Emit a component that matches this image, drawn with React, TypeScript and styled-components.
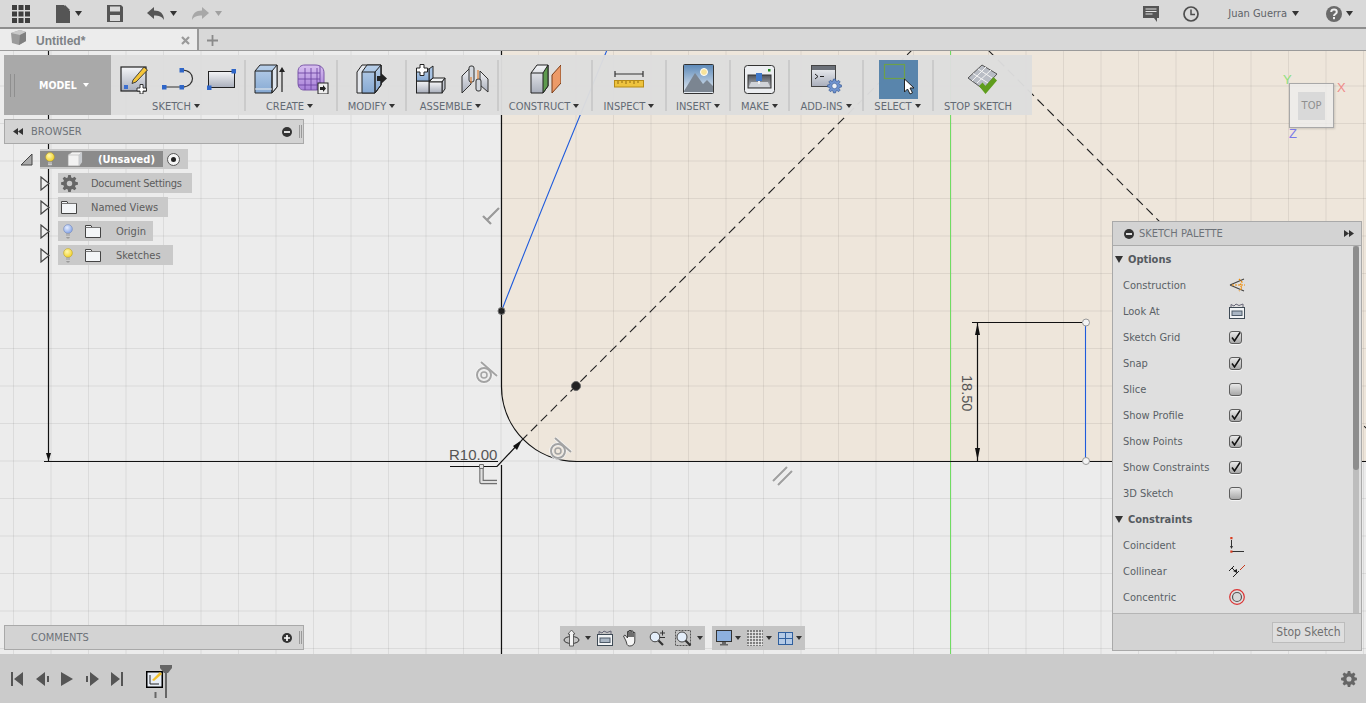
import React from 'react'
import styled, { createGlobalStyle } from 'styled-components'

const Global = createGlobalStyle`
  html, body { margin: 0; padding: 0; height: 100%; overflow: hidden; }
  body { font-family: "DejaVu Sans Condensed", "DejaVu Sans", "Liberation Sans", sans-serif; font-stretch: condensed; }
`

const Page = styled.div`
  display: flex;
  flex-direction: column;
  width: 1366px;
  height: 703px;
  background: #ececec;
`

/* top bar */
const TopBar = styled.header`
  display: flex;
  align-items: center;
  flex: none;
  height: 27px;
  padding-left: 12px;
  background: #d9d9d9;
  border-bottom: 2px solid #8e8e8e;
`
const TopItem = styled.div<{ $ml?: number }>`
  display: flex;
  align-items: center;
  margin-left: ${p => p.$ml || 0}px;
`
const Spring = styled.div`
  flex: 1;
`
const UserName = styled.span`
  font-size: 11px;
  color: #5f6368;
`
const IconSvg = styled.svg`
  display: block;
  flex: none;
`
const Caret = ({ color = '#333', ml = 0, w = 7 }: { color?: string; ml?: number; w?: number }) => (
  <IconSvg width={w} height={w === 7 ? 5 : 4} viewBox="0 0 8 5" preserveAspectRatio="none" style={{ marginLeft: ml }}>
    <path d="M0 0h8L4 5z" fill={color} />
  </IconSvg>
)

/* tabs */
const TabBar = styled.div`
  display: flex;
  align-items: stretch;
  flex: none;
  height: 21px;
  background: #d8d8d8;
  border-bottom: 1px solid #9a9a9a;
`
const Tab = styled.div`
  display: flex;
  align-items: center;
  width: 199px;
  padding-left: 10px;
  box-sizing: border-box;
  background: #ececec;
  border-right: 2px solid #9a9a9a;
`
const TabCube = styled(IconSvg)`
  margin-top: -3px;
`
const TabTitle = styled.span`
  margin-left: 10px;
  padding-top: 3px;
  flex: 1;
  font: bold 12px "Liberation Sans", sans-serif;
  color: #7d8286;
`
const TabClose = styled(IconSvg)`
  margin: 2px 7px 0 0;
`
const TabPlus = styled(IconSvg)`
  margin: 6px 0 0 8px;
`

/* canvas */
const Canvas = styled.main`
  position: relative;
  flex: 1;
  overflow: hidden;
`
const Drawing = styled.svg`
  position: absolute;
  left: 0;
  top: 0;
`

/* ribbon */
const Ribbon = styled.nav`
  position: absolute;
  left: 4px;
  top: 4px;
  display: flex;
  width: 1028px;
  height: 60px;
  background: rgba(221, 221, 221, 0.97);
`
const ModelBlock = styled.div`
  display: flex;
  align-items: center;
  width: 107px;
  padding-left: 6px;
  box-sizing: border-box;
  background: #a9a9a9;
  color: #fff;
  font-size: 10.5px;
  font-weight: bold;
`
const ModelGrip = styled.div`
  width: 5px;
  height: 23px;
  margin-right: 24px;
  box-sizing: border-box;
  border-left: 1px solid #8f8f8f;
  border-right: 1px solid #8f8f8f;
`
const Group = styled.div<{ $w: number }>`
  display: flex;
  flex-direction: column;
  align-items: center;
  width: ${p => p.$w}px;
`
const GroupIcons = styled.div<{ $gap?: number }>`
  display: flex;
  align-items: center;
  justify-content: center;
  gap: ${p => p.$gap || 0}px;
  height: 38px;
  margin-top: 5px;
`
const GroupLabel = styled.div<{ $pr?: number }>`
  display: flex;
  align-items: center;
  gap: 3px;
  height: 14px;
  margin-top: 1px;
  padding-right: ${p => p.$pr || 0}px;
  font-size: 11px;
  color: #636a74;
  white-space: nowrap;
`
const Divider = styled.div`
  flex: none;
  width: 2px;
  margin: 5px 0 4px;
  background: #cbcbcb;
`
const SelectTile = styled.div`
  display: flex;
  width: 39px;
  height: 39px;
  background: #5985ac;
`

/* browser panel */
const PanelBar = styled.div`
  position: absolute;
  left: 4px;
  display: flex;
  align-items: center;
  width: 300px;
  height: 25px;
  box-sizing: border-box;
  padding: 0 1px 0 8px;
  background: #d3d3d3;
  border: 1px solid #a9a9a9;
  font-size: 11px;
  color: #6d7278;
`
const BrowserBar = styled(PanelBar)`
  top: 68px;
`
const CommentsBar = styled(PanelBar)`
  top: 574px;
`
const PanelTitle = styled.span<{ $ml: number }>`
  flex: 1;
  margin-left: ${p => p.$ml}px;
`
const Grip = styled.div`
  width: 3px;
  height: 13px;
  margin-left: 7px;
  border-left: 1px solid #9a9a9a;
  border-right: 1px solid #9a9a9a;
  box-sizing: border-box;
`
const Tree = styled.div`
  position: absolute;
  left: 20px;
  top: 98px;
  display: flex;
  flex-direction: column;
  gap: 4px;
`
const TreeRow = styled.div`
  display: flex;
  align-items: center;
  height: 20px;
`
const ExpandSlot = styled.div`
  width: 38px;
  padding-left: 20px;
  box-sizing: border-box;
`
const RootSlot = styled.div`
  width: 20px;
`
const Pill = styled.div<{ $w: number }>`
  display: flex;
  align-items: center;
  width: ${p => p.$w}px;
  height: 20px;
  background: #c9c9c9;
  font-size: 11px;
  color: #5c5c5c;
`
const TightName = styled.span`
  letter-spacing: -0.25px;
`
const RootName = styled.div`
  display: flex;
  align-items: center;
  width: 123px;
  height: 16px;
  background: #8b8b8b;
`
const RootText = styled.span`
  margin-left: 8px;
  font-size: 11px;
  font-weight: bold;
  color: #fff;
`
const IconSlot = styled.div<{ $w: number }>`
  display: flex;
  align-items: center;
  justify-content: center;
  width: ${p => p.$w}px;
`

/* nav strip */
const NavStrip = styled.div`
  position: absolute;
  left: 560px;
  top: 575px;
  display: flex;
  gap: 7px;
`
const NavGroup = styled.div<{ $w: number; $pl: number }>`
  display: flex;
  align-items: center;
  gap: 6px;
  width: ${p => p.$w}px;
  height: 24px;
  padding-left: ${p => p.$pl}px;
  box-sizing: border-box;
  background: #c4c4c4;
`
const NavItem = styled.div`
  display: flex;
  align-items: center;
  gap: 3px;
`

/* palette */
const Palette = styled.aside`
  position: absolute;
  left: 1112px;
  top: 170px;
  display: flex;
  flex-direction: column;
  width: 250px;
  height: 430px;
  box-sizing: border-box;
  background: #dfdfdf;
  border: 1px solid #a9a9a9;
`
const PaletteHead = styled.div`
  display: flex;
  align-items: center;
  flex: none;
  height: 24px;
  padding: 0 7px 0 11px;
  background: #d3d3d3;
  border-bottom: 1px solid #ababab;
  box-sizing: border-box;
  font-size: 11px;
  color: #6d7278;
`
const PaletteBody = styled.div`
  display: flex;
  flex: 1;
  min-height: 0;
`
const PaletteList = styled.div`
  flex: 1;
`
const Section = styled.div`
  display: flex;
  align-items: center;
  gap: 5px;
  height: 26px;
  padding-left: 2px;
  font-size: 11px;
  font-weight: bold;
  color: #555a60;
`
const Row = styled.div`
  display: flex;
  align-items: center;
  height: 26px;
  padding-left: 10px;
  font-size: 11px;
  color: #5a5f66;
`
const RowLabel = styled.span`
  width: 106px;
`
const Check = styled.div`
  display: flex;
  align-items: center;
  justify-content: center;
  width: 13px;
  height: 13px;
  box-sizing: border-box;
  border: 1px solid #5e5e5e;
  border-radius: 3px;
  background: linear-gradient(#e9e9e9, #a8a8a8);
  box-shadow: 0 1px 0 #f4f4f4;
`
const ScrollTrack = styled.div`
  flex: none;
  width: 6px;
  margin-right: 2px;
  background: #bdbdbd;
`
const ScrollThumb = styled.div`
  height: 224px;
  border-radius: 3px;
  background: #8d8d8d;
`
const PaletteFoot = styled.div`
  display: flex;
  align-items: center;
  justify-content: flex-end;
  flex: none;
  height: 36px;
  padding-right: 16px;
  background: #d3d3d3;
  border-top: 1px solid #b5b5b5;
`
const StopButton = styled.button`
  width: 73px;
  height: 21px;
  padding: 0;
  background: #dedede;
  border: 1px solid #bcbcbc;
  font: 12px "DejaVu Sans Condensed", "DejaVu Sans", sans-serif;
  font-stretch: condensed;
  color: #707070;
`

/* view cube */
const ViewCube = styled.div`
  position: absolute;
  left: 1289px;
  top: 32px;
  display: flex;
  align-items: center;
  justify-content: center;
  width: 45px;
  height: 45px;
  box-sizing: border-box;
  background: rgba(238, 238, 238, 0.75);
  border: 1px solid #a8a8a8;
  box-shadow: 1px 1px 2px rgba(0, 0, 0, 0.15);
`
const CubeFace = styled.div`
  display: flex;
  align-items: center;
  justify-content: center;
  width: 27px;
  height: 28px;
  background: #d9d9d9;
  font: 11px "DejaVu Sans Condensed", "DejaVu Sans", sans-serif;
  font-stretch: condensed;
  color: #8f8f8f;
`
const Axis = styled.span<{ $x: number; $y: number; $c: string }>`
  position: absolute;
  left: ${p => p.$x}px;
  top: ${p => p.$y}px;
  font: 13px "Liberation Sans", sans-serif;
  color: ${p => p.$c};
`

/* timeline */
const Timeline = styled.footer`
  display: flex;
  align-items: center;
  flex: none;
  height: 49px;
  padding: 0 9px 0 11px;
  background: #cbcbcb;
`
const Transport = styled.div`
  display: flex;
  align-items: center;
  gap: 12.5px;
`
const Steps = styled.div`
  margin-left: 23px;
  align-self: flex-start;
  margin-top: 11px;
`

/* ---- icons ---- */
const Defs = () => (
  <IconSvg width={0} height={0} style={{ position: 'absolute' }}>
    <defs>
      <linearGradient id="gBlue" x1="0" y1="0" x2="0" y2="1">
        <stop offset="0" stopColor="#b9d0ea" />
        <stop offset="1" stopColor="#86a9d3" />
      </linearGradient>
      <linearGradient id="gSteel" x1="0" y1="0" x2="0" y2="1">
        <stop offset="0" stopColor="#f4f5f7" />
        <stop offset="1" stopColor="#a9aebb" />
      </linearGradient>
      <linearGradient id="gPurple" x1="0" y1="0" x2="0" y2="1">
        <stop offset="0" stopColor="#d8c0f0" />
        <stop offset="1" stopColor="#a67fd8" />
      </linearGradient>
      <linearGradient id="gSky" x1="0" y1="0" x2="0" y2="1">
        <stop offset="0" stopColor="#5c89b8" />
        <stop offset="1" stopColor="#e8eef4" />
      </linearGradient>
      <linearGradient id="gWindow" x1="0" y1="0" x2="0" y2="1">
        <stop offset="0" stopColor="#4f535a" />
        <stop offset="1" stopColor="#b5b8bd" />
      </linearGradient>
      <radialGradient id="gBulbY" cx="0.4" cy="0.35" r="0.7">
        <stop offset="0" stopColor="#fff8b0" />
        <stop offset="1" stopColor="#f1cf23" />
      </radialGradient>
      <radialGradient id="gBulbB" cx="0.4" cy="0.35" r="0.7">
        <stop offset="0" stopColor="#e8efff" />
        <stop offset="1" stopColor="#7f9fe4" />
      </radialGradient>
    </defs>
  </IconSvg>
)

const cogPath = (cx: number, cy: number, ro: number, ri: number, teeth = 8) => {
  const pts: string[] = []
  const step = (Math.PI * 2) / teeth
  for (let i = 0; i < teeth; i++) {
    const a = i * step
    const w = step * 0.24
    ;[
      [ri, a - w * 1.5],
      [ro, a - w * 0.8],
      [ro, a + w * 0.8],
      [ri, a + w * 1.5],
    ].forEach(([r, t]) => pts.push(`${(cx + r * Math.cos(t)).toFixed(2)} ${(cy + r * Math.sin(t)).toFixed(2)}`))
  }
  return 'M' + pts.join('L') + 'Z'
}

const Gear = ({ size = 17, color = '#666' }: { size?: number; color?: string }) => (
  <IconSvg width={size} height={size} viewBox="0 0 20 20">
    <path d={cogPath(10, 10, 10, 7.4)} fill={color} />
    <circle cx="10" cy="10" r="3.2" fill="#c9c9c9" />
  </IconSvg>
)
const Bulb = ({ blue = false }: { blue?: boolean }) => (
  <IconSvg width={10} height={15} viewBox="0 0 10 15">
    <circle cx="5" cy="5" r="4.4" fill={`url(#${blue ? 'gBulbB' : 'gBulbY'})`} stroke={blue ? '#6a80b8' : '#b99c18'} strokeWidth=".5" />
    <path d="M3 9.5h4v3.5l-1 1.5H4l-1-1.500z" fill="#9a9a9a" />
    <path d="M3 11h4M3 12.500h4" stroke="#eee" strokeWidth=".6" />
  </IconSvg>
)
const Folder = () => (
  <IconSvg width={16} height={13} viewBox="0 0 16 13">
    <path d="M.5 12.500V.5h5.500l1 2h8.500v10z" fill="#f3f5f7" stroke="#444" />
    <path d="M.5 2.500h15" stroke="#777" />
  </IconSvg>
)
const Expand = () => (
  <IconSvg width={10} height={15} viewBox="0 0 10 15">
    <path d="M1 1v13l8-6.500z" fill="#eee" stroke="#444" strokeWidth="1.2" />
  </IconSvg>
)
const Cube = ({ w = 16, h = 16 }: { w?: number; h?: number }) => (
  <IconSvg width={w} height={h} viewBox="0 0 16 16">
    <path d="M1 4l4-3h10v10l-3 4H1z" fill="#f2f2f2" stroke="#999" strokeWidth=".7" />
    <path d="M12 15V4H1M12 4l3-3" fill="none" stroke="#bbb" strokeWidth=".7" />
    <path d="M12 4l3-3v10l-3 4z" fill="#c9ccd0" />
  </IconSvg>
)
const RoundGlyph = ({ plus = false }: { plus?: boolean }) => (
  <IconSvg width={10} height={10} viewBox="0 0 10 10">
    <circle cx="5" cy="5" r="5" fill="#333" />
    <path d={plus ? 'M2 5h6M5 2v6' : 'M2 5h6'} stroke="#fff" strokeWidth="1.700" />
  </IconSvg>
)
const DoubleArrow = ({ dir }: { dir: 'l' | 'r' }) => (
  <IconSvg width={10} height={7} viewBox="0 0 10 7">
    <path d={dir === 'l' ? 'M5 0v7L0 3.500zM10 0v7L5 3.500z' : 'M0 0v7l5-3.500zM5 0v7l5-3.500z'} fill="#333" />
  </IconSvg>
)

const SketchIcon = () => (
  <IconSvg width={29} height={30} viewBox="0 0 29 30">
    <rect x="1" y="3" width="25" height="24" fill="url(#gSteel)" stroke="#222" strokeWidth="1.200" />
    <path d="M13 16L24 3l3.500 3L16 18l-4 1.500z" fill="#f6c63a" stroke="#333" strokeWidth=".9" />
    <rect x="4" y="21" width="4" height="4" fill="#3c6fd0" />
    <path d="M17 24h3v-3.500h3V24h3.500v3H23v3h-3v-3h-3z" fill="#fff" stroke="#222" strokeWidth=".9" />
  </IconSvg>
)
const ArcIcon = () => (
  <IconSvg width={32} height={24} viewBox="0 0 32 24">
    <path d="M3 20h17M20 3c14 0 14 17 0 17" fill="none" stroke="#333" strokeWidth="1.200" />
    <path d="M0 18h4.500v4.500H0zM17.500 18H22v4.500h-4.500zM17.500 1H22v4.500h-4.500z" fill="#2f66c8" />
  </IconSvg>
)
const RectIcon = () => (
  <IconSvg width={29} height={21} viewBox="0 0 29 21">
    <rect x="1.500" y="2.500" width="26" height="16" fill="url(#gSteel)" stroke="#222" />
    <path d="M24.500 0H29v4.500h-4.500zM0 16.500h4.500V21H0z" fill="#2f66c8" />
  </IconSvg>
)
const ExtrudeIcon = () => (
  <IconSvg width={32} height={30} viewBox="0 0 32 30">
    <path d="M1 7l5-6h17v22l-5 6H1z" fill="url(#gBlue)" stroke="#222" />
    <path d="M18 7l5-6v22l-5 6z" fill="#dfe6ee" stroke="#222" />
    <path d="M1 7h17v22" fill="none" stroke="#222" />
    <path d="M1 25h17" stroke="#eee" />
    <path d="M28 28V6" stroke="#222" strokeWidth="1.200" />
    <path d="M25 8l3-5 3 5z" fill="#222" />
  </IconSvg>
)
const FormIcon = () => (
  <IconSvg width={32} height={30} viewBox="0 0 32 30">
    <path d="M1 8c0-5 3-7 7-7h10c6 0 9 3 9 8v11c0 4-4 6-8 6H7c-4 0-6-3-6-7z" fill="url(#gPurple)" stroke="#7a56a8" />
    <path d="M1 9h22M1 15h22M1 21h20M8 4v22M14 4v22M20 4v22M23 2v22" fill="none" stroke="#6d45a3" strokeWidth=".9" />
    <rect x="21" y="19" width="10" height="11" fill="#eee" stroke="#222" />
    <path d="M23 23h3v-2l3 3.500-3 3.500v-2h-3z" fill="#222" />
  </IconSvg>
)
const ModifyIcon = () => (
  <IconSvg width={31} height={30} viewBox="0 0 31 30">
    <path d="M1 8l5-7h19v20l-6 8H1z" fill="#e4e7ec" stroke="#222" />
    <path d="M6 8l5-7h14v20l-6 8H6z" fill="url(#gBlue)" stroke="#222" />
    <path d="M19 8l6-7v20l-6 8zM6 8h13v21" fill="none" stroke="#222" />
    <path d="M21 12h4V9l6 5.500L25 20v-3h-4z" fill="#222" />
  </IconSvg>
)
const AssembleIcon = () => (
  <IconSvg width={30} height={30} viewBox="0 0 30 30">
    <path d="M13 18l4-4h12l-3 4z" fill="#f0f2f4" stroke="#222" />
    <path d="M26 18l3-4v11l-3 4z" fill="#c4c9d2" stroke="#222" />
    <rect x="13" y="18" width="13" height="11" fill="url(#gSteel)" stroke="#222" />
    <rect x=".5" y="17" width="12.500" height="12" fill="url(#gSteel)" stroke="#222" />
    <path d="M13 5l4-3v12l-4 3z" fill="#a8c3e4" stroke="#222" />
    <rect x=".5" y="5" width="12.500" height="12" fill="url(#gBlue)" stroke="#222" />
    <path d="M4 .5h4v3.500h3.500v4H8v3.500H4V8H.5V4H4z" fill="#fff" stroke="#222" />
  </IconSvg>
)
const JointIcon = () => (
  <IconSvg width={28} height={28} viewBox="0 0 28 28">
    <path d="M1 11l9-9v17l-9 9z" fill="url(#gSteel)" stroke="#333" />
    <rect x="8" y="1" width="5" height="16" rx="2" fill="#d4d8de" stroke="#333" />
    <path d="M19 6l8 8v13l-8-7z" fill="url(#gSteel)" stroke="#333" />
    <rect x="15" y="14" width="5" height="12" rx="2" fill="#d4d8de" stroke="#333" />
    <path d="M17 5v9" stroke="#e07b2a" strokeWidth="1.100" />
    <path d="M10 12v6" stroke="#e07b2a" strokeWidth="1.100" />
  </IconSvg>
)
const ConstructIcon = () => (
  <IconSvg width={31} height={30} viewBox="0 0 31 30">
    <path d="M1 9l6-8h11v21l-5 7H1z" fill="url(#gSteel)" stroke="#222" />
    <path d="M13 9l5-8v21l-5 7z" fill="#5e9a4f" stroke="#222" />
    <path d="M1 9h12" stroke="#222" />
    <path d="M22 11l9-10v18l-9 10z" fill="#ec9a68" stroke="#7c3d17" />
  </IconSvg>
)
const InspectIcon = () => (
  <IconSvg width={30} height={17} viewBox="0 0 30 17">
    <path d="M1 3h28M1 0v6M29 0v6" stroke="#333" strokeWidth="1.200" />
    <rect x=".5" y="9.500" width="29" height="6.500" fill="#eec33d" stroke="#b58a16" />
    <path d="M4 10v3M8 10v2M12 10v3M16 10v2M20 10v3M24 10v2" stroke="#916b10" />
  </IconSvg>
)
const InsertIcon = () => (
  <IconSvg width={31} height={30} viewBox="0 0 31 30">
    <rect x=".5" y=".5" width="30" height="29" rx="1" fill="url(#gSky)" stroke="#333" />
    <path d="M1 27L12 9l8 11 4-4 6 6v6H1z" fill="#7b8591" />
    <circle cx="21" cy="8" r="3.500" fill="#f8e39a" stroke="#fff" />
  </IconSvg>
)
const MakeIcon = () => (
  <IconSvg width={31} height={29} viewBox="0 0 31 29">
    <rect x=".5" y=".5" width="30" height="28" rx="3" fill="#eceef1" stroke="#333" />
    <rect x="4" y="10" width="23" height="13" fill="url(#gWindow)" stroke="#333" />
    <path d="M7 17h17l2 5H5z" fill="#d0d3d8" />
    <rect x="12" y="8" width="6" height="8" fill="#3f78c9" />
    <path d="M15 16v3" stroke="#eee" strokeWidth="2" />
    <rect x="24" y="4" width="2.500" height="2.500" fill="#228b22" />
  </IconSvg>
)
const AddInsIcon = () => (
  <IconSvg width={31} height={29} viewBox="0 0 31 29">
    <rect x=".5" y=".5" width="24" height="21" fill="url(#gSteel)" stroke="#444" />
    <rect x="1" y="1" width="23" height="4" fill="#6b7078" />
    <path d="M4 9l3 2.500L4 14M9 11.500h4" fill="none" stroke="#222" />
    <path d={cogPath(23.500, 21, 7, 5.200)} fill="#6f93cf" stroke="#2b4f8c" strokeWidth=".6" />
    <circle cx="23.500" cy="21" r="2.700" fill="#eef2f7" stroke="#2b4f8c" strokeWidth=".6" />
  </IconSvg>
)
const SelectIcon = () => (
  <IconSvg width={39} height={39} viewBox="0 0 39 39">
    <rect x="5.500" y="4.500" width="20" height="14" fill="none" stroke="#6da04a" strokeWidth="1.200" />
    <path d="M25.500 19v13l3-3 2.500 5 2.500-1.200-2.500-4.800h4z" fill="#fff" stroke="#222" />
  </IconSvg>
)
const StopIcon = () => (
  <IconSvg width={31} height={31} viewBox="0 0 31 31">
    <path d="M1 14L15 1l15 9-14 15z" fill="#b9bdc5" stroke="#555" />
    <path d="M6 9.500l15 9.500M11 5l14 9M10 19L24 6M5 17L19 3" stroke="#f4f4f4" strokeWidth="1" />
    <path d="M12 22l3.500-3.500L18.500 22l8-9 3.500 3.500L18.500 30z" fill="#5f9d1d" />
  </IconSvg>
)

const SmallLookAt = () => (
  <IconSvg width={16} height={16} viewBox="0 0 16 16">
    <path d="M2 4V1.500l3 1.500 2-2 3 1.500L14 1v3" fill="none" stroke="#667" />
    <rect x=".5" y="4.500" width="15" height="11" fill="#f1f3f5" stroke="#3e4a55" />
    <rect x="3" y="8" width="10" height="4.500" fill="#aab6c4" stroke="#4d5a68" />
  </IconSvg>
)
const ConstructionGlyph = () => (
  <IconSvg width={16} height={16} viewBox="0 0 16 16">
    <path d="M1 8l14-6M1 8l14 6" stroke="#444" strokeWidth="1.100" />
    <path d="M3 8h13M10 2l3 3-2 3 2 3-3 3" fill="none" stroke="#f08a00" strokeDasharray="2 1" strokeWidth="1.200" />
  </IconSvg>
)
const CoincidentGlyph = () => (
  <IconSvg width={15} height={16} viewBox="0 0 15 16">
    <path d="M2.500 3v8" stroke="#333" />
    <path d="M1 9h3l-1.500 3z" fill="#333" />
    <path d="M2 14.500h13" stroke="#333" />
    <rect x="1.300" y="0" width="2.200" height="2.200" fill="#d93a1d" />
    <rect x="1.300" y="13.500" width="2.200" height="2.200" fill="#d93a1d" />
  </IconSvg>
)
const CollinearGlyph = () => (
  <IconSvg width={16} height={14} viewBox="0 0 16 14">
    <path d="M0 7l5-5M4 13l6-6" stroke="#222" />
    <path d="M11 6l5-5" stroke="#c6391c" />
    <path d="M3 4l4 4" stroke="#222" />
    <path d="M4 7l4-2v4z" fill="#222" />
  </IconSvg>
)
const ConcentricGlyph = () => (
  <IconSvg width={16} height={16} viewBox="0 0 16 16">
    <circle cx="8" cy="8" r="7.300" fill="none" stroke="#dc3232" strokeWidth="1.200" />
    <circle cx="8" cy="8" r="4.500" fill="#d9d9d9" stroke="#555" strokeWidth="1.200" />
  </IconSvg>
)

const Tick = () => (
  <IconSvg width={10} height={10} viewBox="0 0 10 10">
    <path d="M1 5.500l2.500 3.500L9 .5" fill="none" stroke="#111" strokeWidth="1.500" />
  </IconSvg>
)

/* ---- canvas drawing ---- */
const vGrid = Array.from({ length: 37 }, (_, i) => 13.5 + i * 37.5)
const hGrid = Array.from({ length: 17 }, (_, i) => 48.5 + i * 37.5)

const TangentMark = ({ x, y }: { x: number; y: number }) => (
  <g transform={`translate(${x} ${y})`} fill="none">
    <g stroke="#f6f6f6" strokeWidth="3.500">
      <circle cx="0" cy="0" r="7" />
      <path d="M-3-13L13 1" />
    </g>
    <g stroke="#a3a3a3" strokeWidth="2">
      <circle cx="0" cy="0" r="7" />
      <circle cx="0" cy="0" r="3" strokeWidth="1.500" />
      <path d="M-3-13L13 1" />
    </g>
  </g>
)

const Sketch = () => (
  <Drawing width={1366} height={603} viewBox="0 51 1366 603">
    <path d="M501 51V386A75 75 0 0 0 576 461H1366V51z" fill="#eee6db" />
    {vGrid.map(x => <path key={x} d={`M${x} 51V654`} stroke="rgba(0,0,0,.07)" />)}
    {hGrid.map(y => <path key={y} d={`M0 ${y}H1366`} stroke="rgba(0,0,0,.07)" />)}
    <path d="M950.500 51V654" stroke="#70dc62" />
    <g fill="none" stroke="#111" strokeWidth="1.200">
      <path d="M501.500 51V386A75 75 0 0 0 576.500 461.500H1366" />
      <path d="M501.500 465V654" />
      <path d="M48.500 51V461.500M44 461.500H498" />
      <path d="M450 466.500H497L520 442" />
      <path d="M972 322.500H1082M977.500 322V461" />
    </g>
    <g fill="none" stroke="#222" strokeWidth="1.100" strokeDasharray="9 5">
      <path d="M521 441L912 50" />
      <path d="M988 50L1366 428" />
    </g>
    <path d="M501.500 311Q542 207 607 50" fill="none" stroke="#1f5bdc" strokeWidth="1.100" />
    <path d="M1085.500 322V461" stroke="#1f5bdc" strokeWidth="1.100" />
    <g fill="#111">
      <path d="M46 453h5L48.500 461z" />
      <path d="M522 440l-5 10-4-4z" />
      <path d="M977.500 323l2.500 12h-5zM977.500 460l2.500-12h-5z" />
    </g>
    <circle cx="501.500" cy="311" r="3.500" fill="#222" stroke="#777" />
    <circle cx="576" cy="386" r="4.500" fill="#222" stroke="#666" />
    <circle cx="1086" cy="322.500" r="3.500" fill="#f4f4f4" stroke="#999" />
    <circle cx="1086" cy="461" r="3.500" fill="#f4f4f4" stroke="#999" />
    <text x="449" y="460" fontFamily="Liberation Sans, sans-serif" fontSize="15" fill="#555">R10.00</text>
    <text transform="translate(962 375) rotate(90)" fontFamily="Liberation Sans, sans-serif" fontSize="14.500" fill="#555">18.50</text>
    <TangentMark x={484} y={375} />
    <TangentMark x={558} y={451} />
    <g fill="none" strokeLinejoin="round">
      <path d="M481.500 466V482H497" stroke="#707070" strokeWidth="4.500" />
      <path d="M481.500 466V482H497" stroke="#e0e0e0" strokeWidth="2.200" />
      <rect x="479.500" y="464.500" width="4" height="4" fill="#e0e0e0" stroke="#707070" />
      <path d="M773 481L787 467M778 485L792 471" stroke="#f2f2f2" strokeWidth="4" />
      <path d="M773 481L787 467M778 485L792 471" stroke="#a0a0a0" strokeWidth="2.200" />
      <path d="M487 220L499 208M483 216L491 224" stroke="#f2f2f2" strokeWidth="4" />
      <path d="M487 220L499 208M483 216L491 224" stroke="#9a9a9a" strokeWidth="2.400" />
    </g>
  </Drawing>
)

const optionRows: [string, boolean | 'c' | 'l'][] = [
  ['Construction', 'c'],
  ['Look At', 'l'],
  ['Sketch Grid', true],
  ['Snap', true],
  ['Slice', false],
  ['Show Profile', true],
  ['Show Points', true],
  ['Show Constraints', true],
  ['3D Sketch', false],
]

const TriDown = () => (
  <IconSvg width={8} height={7} viewBox="0 0 9 7" preserveAspectRatio="none">
    <path d="M0 0h9L4.500 7z" fill="#333" />
  </IconSvg>
)

export default function App() {
  return (
    <Page>
      <Global />
      <Defs />
      <TopBar>
        <TopItem>
          <IconSvg width={18} height={18} viewBox="0 0 18 18">
            <path d="M0 0h5v5H0zM6.500 0h5v5h-5zM13 0h5v5h-5zM0 6.500h5v5H0zM6.500 6.500h5v5h-5zM13 6.500h5v5h-5zM0 13h5v5H0zM6.500 13h5v5h-5zM13 13h5v5h-5z" fill="#3e3e3e" />
          </IconSvg>
        </TopItem>
        <TopItem $ml={26}>
          <IconSvg width={14} height={18} viewBox="0 0 14 18">
            <path d="M0 0h8l6 6v12H0zM9 0l5 5H9z" fill="#555" />
          </IconSvg>
          <Caret ml={5} />
        </TopItem>
        <TopItem $ml={25}>
          <IconSvg width={16} height={17} viewBox="0 0 16 17">
            <path d="M0 0h14l2 2v15H0zM3 1.500v5h10v-5zM3 10v6h10v-6z" fill="#555" fillRule="evenodd" />
          </IconSvg>
        </TopItem>
        <TopItem $ml={24}>
          <IconSvg width={17} height={13} viewBox="0 0 17 13">
            <path d="M7 0v3.500c6 0 10 3 10 9.500-2-3.500-5-4.500-10-4.500V12L0 6z" fill="#555" />
          </IconSvg>
          <Caret ml={6} />
        </TopItem>
        <TopItem $ml={15}>
          <IconSvg width={17} height={13} viewBox="0 0 17 13">
            <path d="M10 0v3.500C4 3.500 0 6.500 0 13c2-3.500 5-4.500 10-4.500V12l7-6z" fill="#a8a8a8" />
          </IconSvg>
          <Caret ml={6} color="#a0a0a0" />
        </TopItem>
        <Spring />
        <TopItem>
          <IconSvg width={16} height={16} viewBox="0 0 16 16">
            <path d="M0 0h16v12h-2v4l-3-4H0z" fill="#555" />
            <path d="M2.500 3h11M2.500 5.500h11M2.500 8h7" stroke="#e2e2e2" />
          </IconSvg>
        </TopItem>
        <TopItem $ml={24}>
          <IconSvg width={16} height={16} viewBox="0 0 16 16">
            <circle cx="8" cy="8" r="7" fill="none" stroke="#4e4e4e" strokeWidth="1.700" />
            <path d="M8 3.500V8.500H12" fill="none" stroke="#4e4e4e" strokeWidth="1.500" />
          </IconSvg>
        </TopItem>
        <TopItem $ml={29}>
          <UserName>Juan Guerra</UserName>
          <Caret ml={5} />
        </TopItem>
        <TopItem $ml={27}>
          <IconSvg width={16} height={16} viewBox="0 0 16 16">
            <circle cx="8" cy="8" r="8" fill="#6a6a6a" />
            <path d="M5.200 6C5.400 2.800 10.800 2.800 10.800 6 10.800 8 8 8 8 10" fill="none" stroke="#eee" strokeWidth="2" />
            <rect x="7" y="11" width="2" height="2.200" fill="#eee" />
          </IconSvg>
          <Caret ml={4} />
        </TopItem>
        <TopItem $ml={13} />
      </TopBar>
      <TabBar>
        <Tab>
          <TabCube width={16} height={16} viewBox="0 0 16 16">
            <path d="M1 3l9-3 6 2v9l-7 4-7-2z" fill="#9b9b9b" />
            <path d="M1 3l9 2 6-3-6-2z" fill="#c9c9c9" />
            <path d="M10 5l6-3v9l-7 4z" fill="#7f7f7f" />
          </TabCube>
          <TabTitle>Untitled*</TabTitle>
          <TabClose width={9} height={9} viewBox="0 0 9 9">
            <path d="M1 1l7 7M8 1L1 8" stroke="#9a9a9a" strokeWidth="2.200" />
          </TabClose>
        </Tab>
        <TabPlus width={11} height={11} viewBox="0 0 11 11">
          <path d="M5.500 0v11M0 5.500h11" stroke="#8a8a8a" strokeWidth="1.800" />
        </TabPlus>
      </TabBar>
      <Canvas>
        <Sketch />
        <Ribbon>
          <ModelBlock><ModelGrip />MODEL<Caret color="#fff" ml={6} w={6} /></ModelBlock>
          <Group $w={133}>
            <GroupIcons $gap={13}><SketchIcon /><ArcIcon /><RectIcon /></GroupIcons>
            <GroupLabel $pr={3}>SKETCH <Caret w={6} /></GroupLabel>
          </Group>
          <Divider />
          <Group $w={90}>
            <GroupIcons $gap={11}><ExtrudeIcon /><FormIcon /></GroupIcons>
            <GroupLabel $pr={3}>CREATE <Caret w={6} /></GroupLabel>
          </Group>
          <Divider />
          <Group $w={67}>
            <GroupIcons><ModifyIcon /></GroupIcons>
            <GroupLabel>MODIFY <Caret w={6} /></GroupLabel>
          </Group>
          <Divider />
          <Group $w={90}>
            <GroupIcons $gap={15}><AssembleIcon /><JointIcon /></GroupIcons>
            <GroupLabel $pr={3}>ASSEMBLE <Caret w={6} /></GroupLabel>
          </Group>
          <Divider />
          <Group $w={92}>
            <GroupIcons><ConstructIcon /></GroupIcons>
            <GroupLabel $pr={2}>CONSTRUCT <Caret w={6} /></GroupLabel>
          </Group>
          <Divider />
          <Group $w={72}>
            <GroupIcons><InspectIcon /></GroupIcons>
            <GroupLabel>INSPECT <Caret w={6} /></GroupLabel>
          </Group>
          <Divider />
          <Group $w={62}>
            <GroupIcons><InsertIcon /></GroupIcons>
            <GroupLabel>INSERT <Caret w={6} /></GroupLabel>
          </Group>
          <Divider />
          <Group $w={57}>
            <GroupIcons><MakeIcon /></GroupIcons>
            <GroupLabel>MAKE <Caret w={6} /></GroupLabel>
          </Group>
          <Divider />
          <Group $w={72}>
            <GroupIcons><AddInsIcon /></GroupIcons>
            <GroupLabel>ADD-INS <Caret w={6} /></GroupLabel>
          </Group>
          <Divider />
          <Group $w={68}>
            <GroupIcons><SelectTile><SelectIcon /></SelectTile></GroupIcons>
            <GroupLabel $pr={1}>SELECT <Caret w={6} /></GroupLabel>
          </Group>
          <Divider />
          <Group $w={97}>
            <GroupIcons><StopIcon /></GroupIcons>
            <GroupLabel $pr={9}>STOP SKETCH</GroupLabel>
          </Group>
        </Ribbon>

        <BrowserBar>
          <DoubleArrow dir="l" />
          <PanelTitle $ml={8}>BROWSER</PanelTitle>
          <RoundGlyph />
          <Grip />
        </BrowserBar>
        <Tree>
          <TreeRow>
            <RootSlot>
              <IconSvg width={13} height={13} viewBox="0 0 13 13">
                <path d="M1 12L12 1v11z" fill="#aaa" stroke="#444" />
              </IconSvg>
            </RootSlot>
            <Pill $w={148}>
              <RootName>
                <IconSlot $w={20}><Bulb /></IconSlot>
                <IconSlot $w={30}><Cube /></IconSlot>
                <RootText>(Unsaved)</RootText>
              </RootName>
              <IconSlot $w={20}>
                <IconSvg width={13} height={13} viewBox="0 0 13 13">
                  <circle cx="6.500" cy="6.500" r="6" fill="#f4f4f4" stroke="#555" />
                  <circle cx="6.500" cy="6.500" r="2.500" fill="#222" />
                </IconSvg>
              </IconSlot>
            </Pill>
          </TreeRow>
          <TreeRow>
            <ExpandSlot><Expand /></ExpandSlot>
            <Pill $w={134}>
              <IconSlot $w={22}><Gear /></IconSlot>
              <IconSlot $w={11} />
              <TightName>Document Settings</TightName>
            </Pill>
          </TreeRow>
          <TreeRow>
            <ExpandSlot><Expand /></ExpandSlot>
            <Pill $w={110}>
              <IconSlot $w={22}><Folder /></IconSlot>
              <IconSlot $w={11} />
              Named Views
            </Pill>
          </TreeRow>
          <TreeRow>
            <ExpandSlot><Expand /></ExpandSlot>
            <Pill $w={95}>
              <IconSlot $w={20}><Bulb blue /></IconSlot>
              <IconSlot $w={30}><Folder /></IconSlot>
              <IconSlot $w={8} />
              Origin
            </Pill>
          </TreeRow>
          <TreeRow>
            <ExpandSlot><Expand /></ExpandSlot>
            <Pill $w={115}>
              <IconSlot $w={20}><Bulb /></IconSlot>
              <IconSlot $w={30}><Folder /></IconSlot>
              <IconSlot $w={8} />
              Sketches
            </Pill>
          </TreeRow>
        </Tree>

        <CommentsBar>
          <PanelTitle $ml={18}>COMMENTS</PanelTitle>
          <RoundGlyph plus />
          <Grip />
        </CommentsBar>

        <NavStrip>
          <NavGroup $w={145} $pl={3}>
            <NavItem>
              <IconSvg width={17} height={17} viewBox="0 0 17 17">
                <ellipse cx="8.500" cy="10" rx="7.500" ry="3.500" fill="none" stroke="#333" />
                <path d="M6.500 16V4H5l3.500-4L12 4h-1.500v12z" fill="#f4f4f4" stroke="#444" strokeWidth=".8" />
              </IconSvg>
              <Caret w={6} ml={2} />
            </NavItem>
            <SmallLookAt />
            <IconSvg width={16} height={18} viewBox="0 0 16 18" style={{ marginLeft: 4 }}>
              <path d="M3 12L.5 7 2 6l2.500 3V2.500h1.500V8 1.500h2V8 2h2v6-4.500h1.800V12c0 3-2 5-5 5S4 15 3 12z" fill="#f5f5f5" stroke="#333" strokeWidth=".9" />
            </IconSvg>
            <IconSvg width={17} height={17} viewBox="0 0 17 17" style={{ marginLeft: 4 }}>
              <circle cx="6" cy="7" r="4.800" fill="#e4eefa" stroke="#444" />
              <path d="M9.500 10.500l4.500 4.500" stroke="#333" strokeWidth="2.200" />
              <path d="M11 3h5M13.500 .5v5M11 7.500h5" stroke="#333" />
            </IconSvg>
            <NavItem style={{ marginLeft: 3 }}>
              <IconSvg width={17} height={17} viewBox="0 0 17 17">
                <rect x=".5" y=".5" width="15" height="15" fill="none" stroke="#555" strokeDasharray="2 1" />
                <circle cx="7" cy="7" r="5" fill="#e4eefa" stroke="#444" />
                <path d="M10.500 10.500l5 5" stroke="#333" strokeWidth="2.200" />
              </IconSvg>
              <Caret w={6} ml={2} />
            </NavItem>
          </NavGroup>
          <NavGroup $w={93} $pl={4}>
            <NavItem>
              <IconSvg width={16} height={16} viewBox="0 0 16 16">
                <rect x=".5" y=".5" width="15" height="11" fill="#8db0de" stroke="#333" />
                <path d="M6 12v2H4v1.500h8V14h-2v-2z" fill="#666" />
              </IconSvg>
              <Caret w={6} />
            </NavItem>
            <NavItem>
              <IconSvg width={16} height={16} viewBox="0 0 16 16">
                <rect width="16" height="16" fill="#7f7f7f" />
                <path d="M2.500 0v16M5.500 0v16M8.500 0v16M11.500 0v16M14.500 0v16M0 2.500h16M0 5.500h16M0 8.500h16M0 11.500h16M0 14.500h16" stroke="#eee" strokeWidth=".8" />
              </IconSvg>
              <Caret w={6} />
            </NavItem>
            <NavItem>
              <IconSvg width={15} height={13} viewBox="0 0 15 13">
                <rect x=".5" y=".5" width="14" height="12" fill="#b4cae6" stroke="#2f5f9e" />
                <path d="M7.500 0v13M0 6.500h15" stroke="#2f5f9e" />
              </IconSvg>
              <Caret w={6} />
            </NavItem>
          </NavGroup>
        </NavStrip>

        <ViewCube><CubeFace>TOP</CubeFace></ViewCube>
        <Axis $x={1283} $y={21} $c="#8fe07c">Y</Axis>
        <Axis $x={1337} $y={29} $c="#ef8a8a">X</Axis>
        <Axis $x={1289} $y={75} $c="#7a7ae8">Z</Axis>

        <Palette>
          <PaletteHead>
            <RoundGlyph />
            <PanelTitle $ml={5}>SKETCH PALETTE</PanelTitle>
            <DoubleArrow dir="r" />
          </PaletteHead>
          <PaletteBody>
            <PaletteList>
              <Section><TriDown />Options</Section>
              {optionRows.map(([label, v]) => (
                <Row key={label}>
                  <RowLabel>{label}</RowLabel>
                  {v === 'c' && <ConstructionGlyph />}
                  {v === 'l' && <SmallLookAt />}
                  {typeof v === 'boolean' && <Check>{v && <Tick />}</Check>}
                </Row>
              ))}
              <Section><TriDown />Constraints</Section>
              <Row><RowLabel>Coincident</RowLabel><CoincidentGlyph /></Row>
              <Row><RowLabel>Collinear</RowLabel><CollinearGlyph /></Row>
              <Row><RowLabel>Concentric</RowLabel><ConcentricGlyph /></Row>
            </PaletteList>
            <ScrollTrack><ScrollThumb /></ScrollTrack>
          </PaletteBody>
          <PaletteFoot><StopButton>Stop Sketch</StopButton></PaletteFoot>
        </Palette>
      </Canvas>
      <Timeline>
        <Transport>
          <IconSvg width={12} height={14} viewBox="0 0 12 14"><path d="M0 0h2v14H0zM12 0v14L3 7z" fill="#555" /></IconSvg>
          <IconSvg width={13} height={14} viewBox="0 0 13 14"><path d="M9 0v14L0 7zM11 4h2v6h-2z" fill="#555" /></IconSvg>
          <IconSvg width={12} height={14} viewBox="0 0 12 14"><path d="M0 0l12 7-12 7z" fill="#555" /></IconSvg>
          <IconSvg width={13} height={14} viewBox="0 0 13 14"><path d="M4 0v14l9-7zM0 4h2v6H0z" fill="#555" /></IconSvg>
          <IconSvg width={12} height={14} viewBox="0 0 12 14"><path d="M0 0v14l9-7zM10 0h2v14h-2z" fill="#555" /></IconSvg>
        </Transport>
        <Steps>
          <IconSvg width={28} height={34} viewBox="0 0 28 34">
            <rect x=".75" y="6.750" width="15.500" height="15.500" fill="#e8eef7" stroke="#000" strokeWidth="1.500" />
            <path d="M4 10v9h9" fill="none" stroke="#222" />
            <path d="M6 15l8-8 2 2-8 7z" fill="#f1c02e" />
            <path d="M8.500 27h2v6h-2z" fill="#666" />
            <path d="M14 0h12v3l-4 5h-4l-4-5z" fill="#666" />
            <path d="M19 8h2v25h-2z" fill="#666" />
          </IconSvg>
        </Steps>
        <Spring />
        <Gear color="#666" size={16} />
      </Timeline>
    </Page>
  )
}
